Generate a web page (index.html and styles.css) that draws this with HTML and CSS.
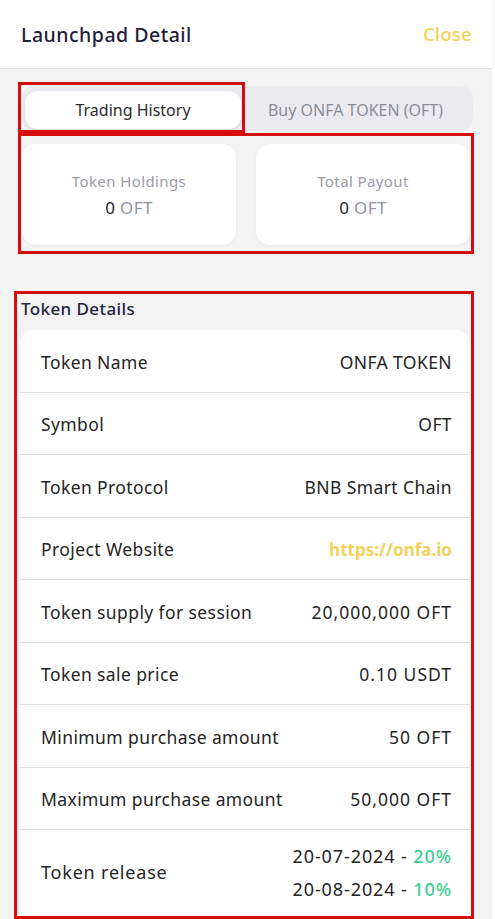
FILE: index.html
```html
<!DOCTYPE html>
<html lang="en">
<head>
<meta charset="utf-8">
<title>Launchpad Detail</title>
<link rel="stylesheet" href="styles.css">
</head>
<body>
<div class="app">
  <header class="header">
    <h1 class="title">Launchpad Detail</h1>
    <span class="close">Close</span>
  </header>
  <main class="content">
    <div class="tabs">
      <div class="tab active">Trading History</div>
      <div class="tab">Buy ONFA TOKEN (OFT)</div>
    </div>
    <div class="stats">
      <div class="stat">
        <div class="stat-label">Token Holdings</div>
        <div class="stat-value">0 <span class="unit">OFT</span></div>
      </div>
      <div class="stat">
        <div class="stat-label">Total Payout</div>
        <div class="stat-value">0 <span class="unit">OFT</span></div>
      </div>
    </div>
    <h2 class="section-title">Token Details</h2>
    <div class="details">
      <div class="row"><span>Token Name</span><span>ONFA TOKEN</span></div>
      <div class="row"><span>Symbol</span><span>OFT</span></div>
      <div class="row"><span>Token Protocol</span><span>BNB Smart Chain</span></div>
      <div class="row"><span>Project Website</span><span class="link">https://onfa.io</span></div>
      <div class="row"><span>Token supply for session</span><span class="num">20,000,000 OFT</span></div>
      <div class="row"><span>Token sale price</span><span class="num">0.10 USDT</span></div>
      <div class="row"><span>Minimum purchase amount</span><span class="num">50 OFT</span></div>
      <div class="row"><span>Maximum purchase amount</span><span class="num">50,000 OFT</span></div>
      <div class="row release"><span class="release-label">Token release</span>
        <div class="release-values">
          <div>20-07-2024 - <span class="pct">20%</span></div>
          <div>20-08-2024 - <span class="pct">10%</span></div>
        </div>
      </div>
    </div>
  </main>
  <div class="mark mark-tab"></div>
  <div class="mark mark-stats"></div>
  <div class="mark mark-details"></div>
</div>
</body>
</html>
```

FILE: styles.css
```css
* { box-sizing: border-box; }
html, body { margin: 0; padding: 0; }
body {
  background: #fafafa;
  font-family: "Noto Sans", "Open Sans", sans-serif;
  color: #232323;
}
.app {
  position: relative;
  width: 492px;
  height: 919px;
  overflow: hidden;
  background: #f3f3f4;
}
.header {
  height: 69px;
  background: #fff;
  border-bottom: 1px solid #e3e3e5;
  display: flex;
  align-items: center;
  justify-content: space-between;
  padding: 0 20px 0 21px;
}
.title {
  margin: 0;
  font-size: 19.5px;
  font-weight: 500;
  letter-spacing: 0.5px;
  color: #1f1d3a;
}
.close {
  font-size: 18px;
  font-weight: 500;
  letter-spacing: 0.5px;
  color: #f2d152;
}
.content {
  padding: 17px 22px 0 22px;
}
.tabs {
  display: grid;
  grid-template-columns: 216px 1fr;
  height: 45px;
  padding: 5px 3px 2px 3px;
  background: #ebebef;
  border-radius: 12px;
  margin-right: -3px;
}
.tab {
  display: flex;
  align-items: center;
  justify-content: center;
  font-size: 16px;
  color: #8b8b96;
  border-radius: 12px;
}
.tab.active {
  background: #fff;
  color: #2c2c2c;
  box-shadow: 0 1px 3px rgba(0,0,0,0.12);
}
.stats {
  display: grid;
  grid-template-columns: 1fr 1fr;
  gap: 20px;
  margin-top: 13px;
}
.stat {
  height: 101px;
  background: #fff;
  border-radius: 14px;
  box-shadow: 0 1px 3px rgba(0,0,0,0.05);
  display: flex;
  flex-direction: column;
  align-items: center;
  justify-content: center;
  gap: 5px;
}
.stat-label {
  font-size: 15px;
  letter-spacing: 0.4px;
  color: #9b9ba3;
}
.stat-value {
  font-size: 17px;
  letter-spacing: 0.4px;
  color: #1d1c2e;
}
.unit { color: #8e939d; }
.section-title {
  margin: 52px 0 10px -1px;
  font-size: 17px;
  font-weight: 500;
  letter-spacing: 0.4px;
  color: #25233f;
}
.details {
  margin-left: -2px;
  background: #fff;
  border-radius: 14px 14px 0 0;
}
.row {
  height: 62.5px;
  display: flex;
  align-items: center;
  justify-content: space-between;
  padding: 2px 18px 0 21px;
  font-size: 17.5px;
  letter-spacing: 0.4px;
  color: #242424;
  border-bottom: 1.5px solid #dfdfe2;
}
.row .num { letter-spacing: 1px; }
.row.release {
  height: 90px;
  border-bottom: none;
  align-items: center;
  padding-top: 0;
  padding-bottom: 6px;
}
.release-label { font-size: 18px; letter-spacing: 0.8px; }
.release-values {
  display: flex;
  flex-direction: column;
  align-items: flex-end;
  gap: 9px;
  font-size: 18px;
  letter-spacing: 0.9px;
}
.link { color: #f3d259; font-weight: 700; font-size: 17px; letter-spacing: 0; }
.pct { color: #3ccf8e; font-weight: 500; }
.mark {
  position: absolute;
  border: 3px solid #d70d0d;
  pointer-events: none;
}
.mark-tab { left: 18px; top: 82px; width: 227px; height: 51px; }
.mark-stats { left: 18px; top: 133px; width: 456px; height: 121px; }
.mark-details { left: 14px; top: 291px; width: 460px; height: 628px; }
```
